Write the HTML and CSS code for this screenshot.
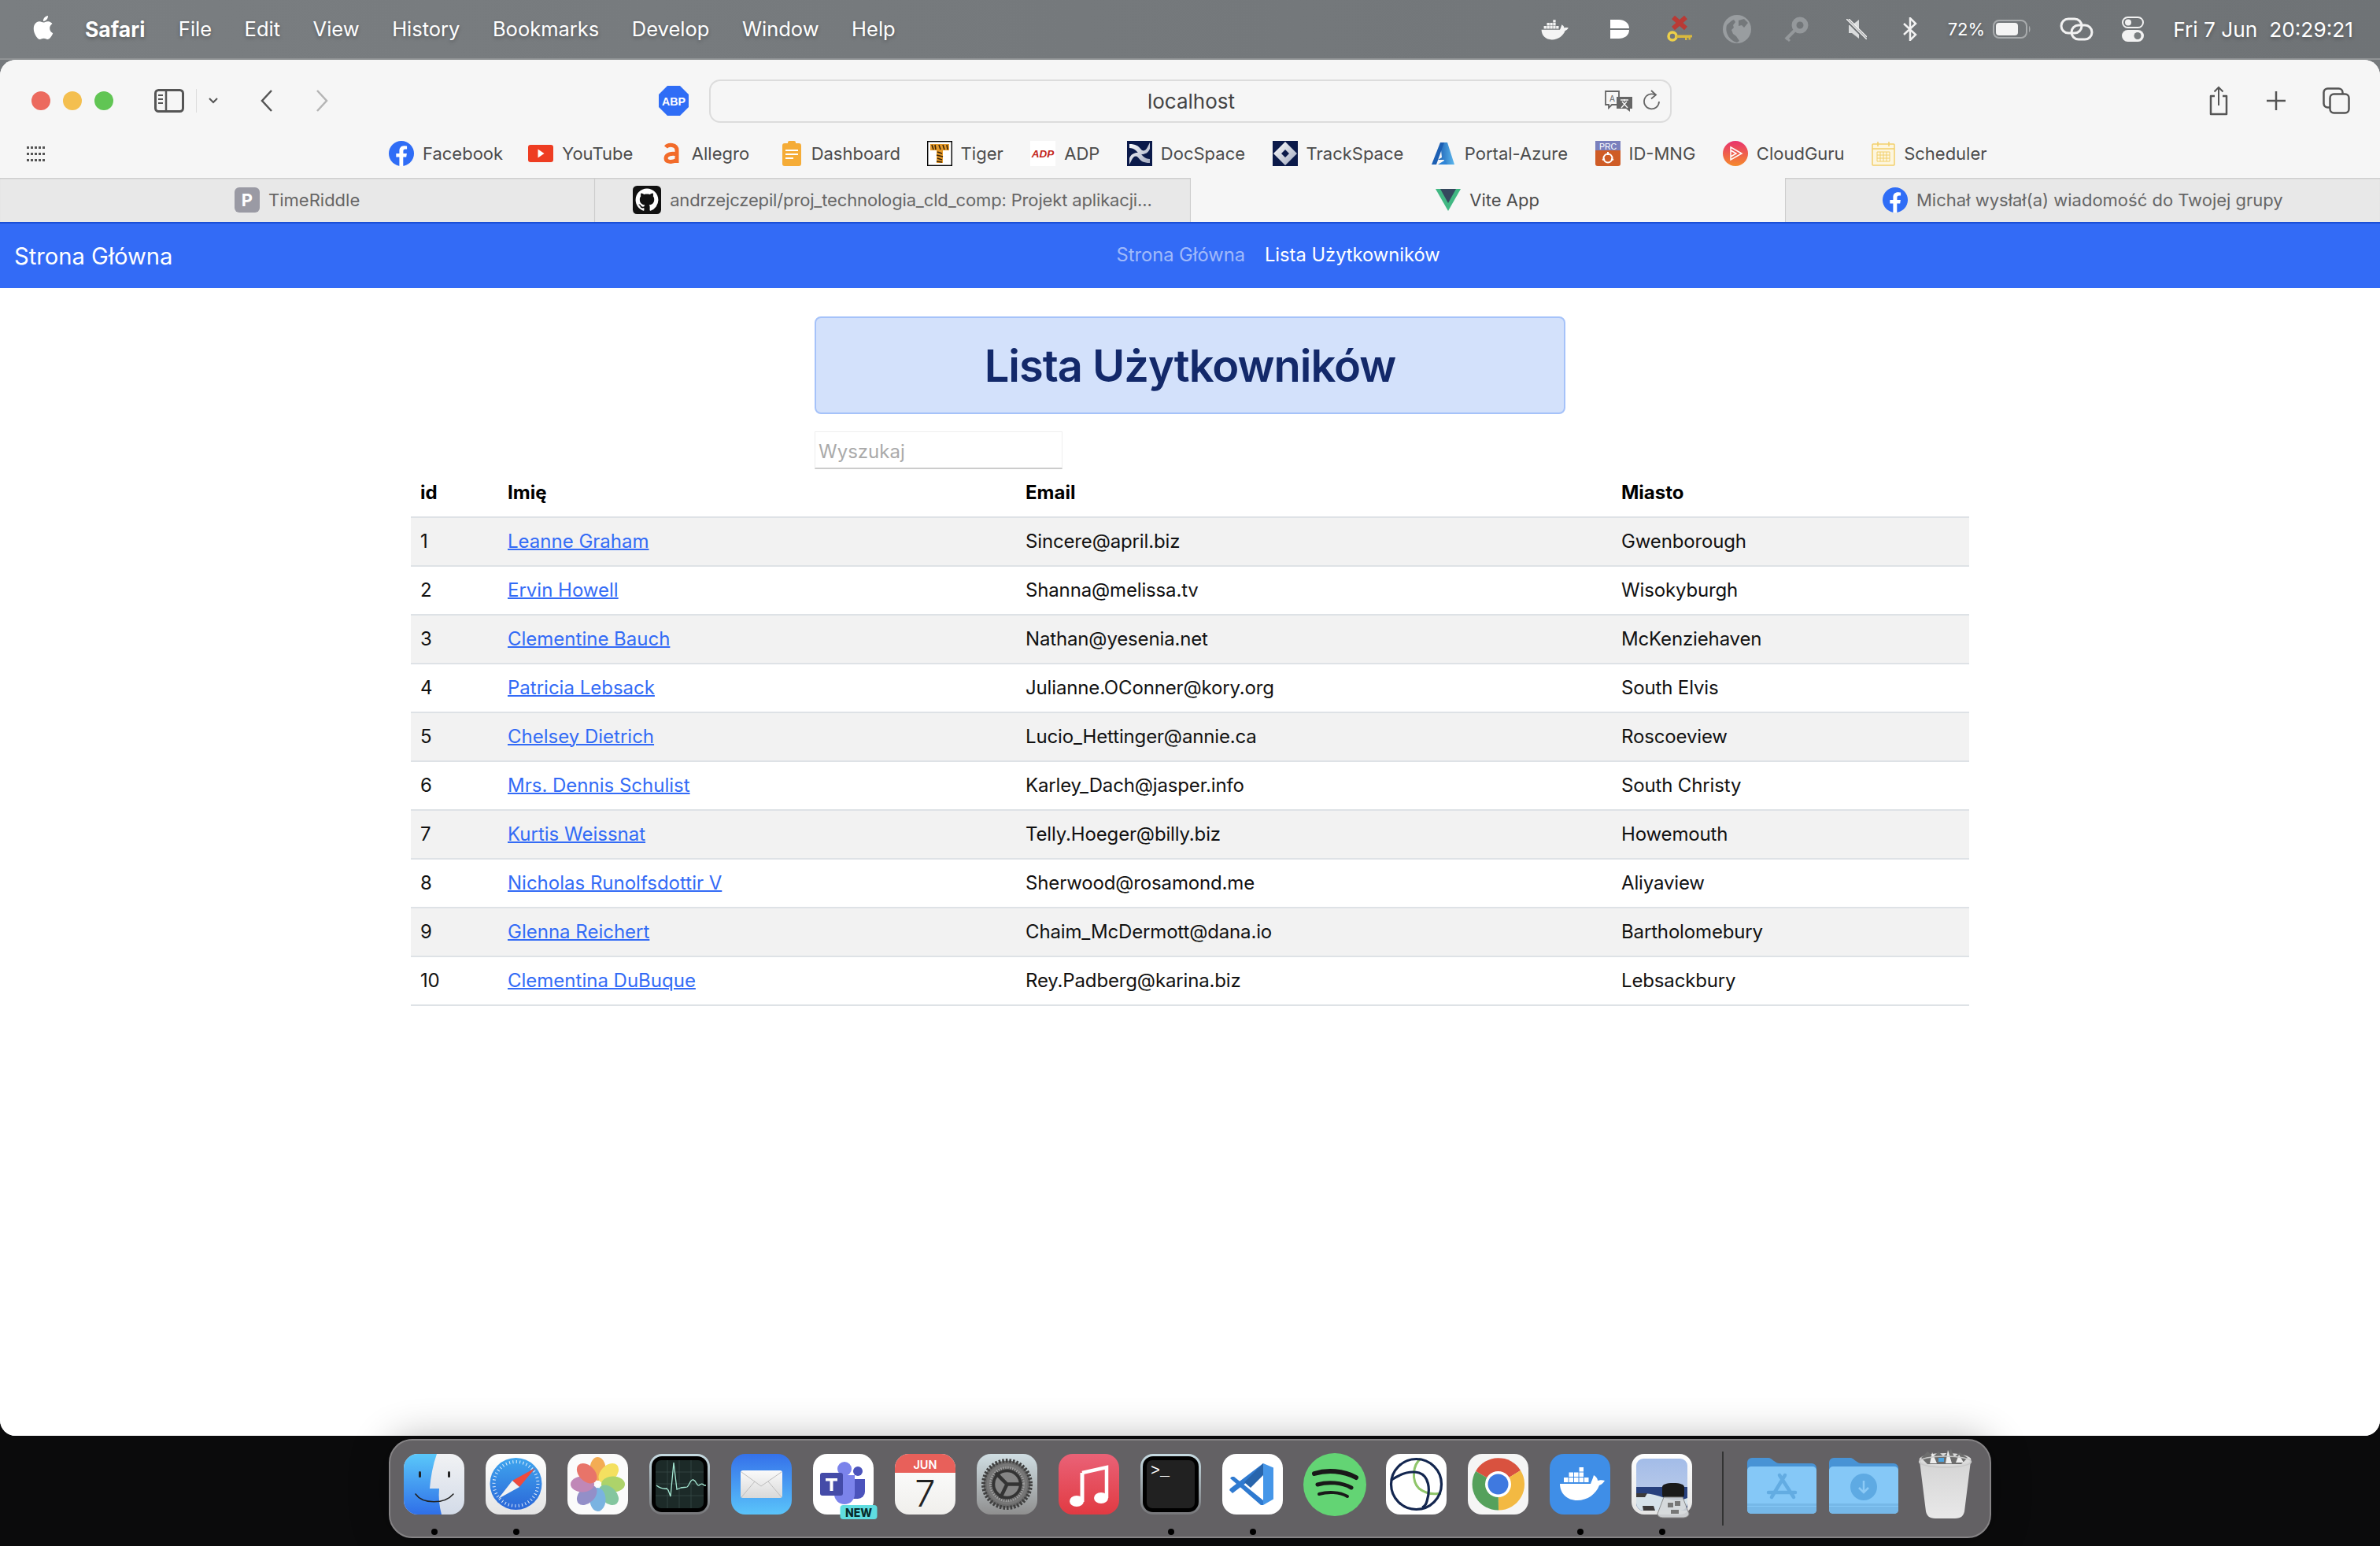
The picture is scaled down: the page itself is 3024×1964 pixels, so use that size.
FILE: index.html
```html
<!DOCTYPE html>
<html lang="pl">
<head>
<meta charset="utf-8">
<title>Vite App</title>
<link rel="stylesheet" href="styles.css">
</head>
<body>
<svg class="defs" width="0" height="0">
  <defs>
    <symbol id="whale" viewBox="0 0 77 77">
      <path d="M13 38H52C53 35 55 31 56 27C59 29 61 31 61 34C64 33 67 33 70 34C68 37 66 39 63 40C59 51 48 59 35 59C22 59 13 50 13 38Z"/>
      <path d="M18 30h5.500v6H18zM24.500 30h5.500v6h-5.500zM31 30h5.500v6H31zM37.500 30h5.500v6h-5.500zM44 30h5.500v6H44zM24.500 23.500h5.500v5.500h-5.500zM31 23.500h5.500v5.500H31zM37.500 23.500h5.500v5.500h-5.500zM37.500 17h5.500v5.500h-5.500z"/>
    </symbol>
    <symbol id="fb" viewBox="0 0 32 32">
      <circle cx="16" cy="16" r="16" fill="#2f6df6"/>
      <path fill="#fff" d="M22.200 20.600l.7-4.600h-4.500v-3c0-1.300.6-2.500 2.700-2.500h2V6.600s-1.800-.3-3.600-.3c-3.700 0-6.100 2.200-6.100 6.200V16h-4.100v4.600h4.100V32h4.900V20.600z"/>
    </symbol>
    <linearGradient id="gFinder" x1="0" y1="0" x2="0" y2="1"><stop offset="0" stop-color="#5ac8fa"/><stop offset="1" stop-color="#2f6fe8"/></linearGradient>
    <linearGradient id="gFinderR" x1="0" y1="0" x2="0" y2="1"><stop offset="0" stop-color="#f1f2f4"/><stop offset="1" stop-color="#d3dbe8"/></linearGradient>
    <linearGradient id="gWhite" x1="0" y1="0" x2="0" y2="1"><stop offset="0" stop-color="#fff"/><stop offset="1" stop-color="#e4e4e4"/></linearGradient>
    <linearGradient id="gSafari" x1="0" y1="0" x2="0" y2="1"><stop offset="0" stop-color="#3fa5ee"/><stop offset="1" stop-color="#2b67d8"/></linearGradient>
    <linearGradient id="gSilver" x1="0" y1="0" x2="0" y2="1"><stop offset="0" stop-color="#c6dbe2"/><stop offset="1" stop-color="#77777a"/></linearGradient>
    <linearGradient id="gMail" x1="0" y1="0" x2="0" y2="1"><stop offset="0" stop-color="#3571ea"/><stop offset="1" stop-color="#5ac4fa"/></linearGradient>
    <linearGradient id="gEnv" x1="0" y1="0" x2="0" y2="1"><stop offset="0" stop-color="#fafafa"/><stop offset="1" stop-color="#d9d9d9"/></linearGradient>
    <linearGradient id="gCal" x1="0" y1="0" x2="0" y2="1"><stop offset="0" stop-color="#fff"/><stop offset="1" stop-color="#f0efec"/></linearGradient>
    <linearGradient id="gGear" x1="0" y1="0" x2="0" y2="1"><stop offset="0" stop-color="#d0dee3"/><stop offset="1" stop-color="#8f8f8f"/></linearGradient>
    <linearGradient id="gMusic" x1="0" y1="0" x2="0" y2="1"><stop offset="0" stop-color="#ea6277"/><stop offset="1" stop-color="#e13a42"/></linearGradient>
    <linearGradient id="gSky" x1="0" y1="0" x2="0" y2="1"><stop offset="0" stop-color="#a3bce8"/><stop offset="1" stop-color="#c2d0ea"/></linearGradient>
    <linearGradient id="gTrash" x1="0" y1="0" x2="0" y2="1"><stop offset="0" stop-color="#dedede"/><stop offset="1" stop-color="#f4f4f4"/></linearGradient>
    <linearGradient id="gCloud" x1="0" y1="0" x2="0" y2="1"><stop offset="0" stop-color="#e8336e"/><stop offset="1" stop-color="#f58a2c"/></linearGradient>
    <linearGradient id="gAz" x1="0" y1="0" x2="1" y2="0"><stop offset="0" stop-color="#1c5fb3"/><stop offset="1" stop-color="#5cb8ee"/></linearGradient>
    <linearGradient id="gDoc" x1="0" y1="0" x2="1" y2="1"><stop offset="0" stop-color="#fff"/><stop offset="1" stop-color="#9ea6bd"/></linearGradient>
    <symbol id="folder" viewBox="0 0 88 74">
      <path fill="#4893d5" d="M0 8a6 6 0 0 1 6-6h20c4 0 5 2 8 4s4 3 7 3h41a6 6 0 0 1 6 6v20H0z"/>
      <rect y="13" width="88" height="60" rx="5" fill="#85c8f7"/>
      <path fill="#76b8e8" d="M0 60h88v8a5 5 0 0 1-5 5H5a5 5 0 0 1-5-5z"/>
      <path fill="#85c8f7" d="M0 63h88v1H0z"/>
    </symbol>
  </defs>
</svg>

<header class="menubar">
  <svg class="apple" viewBox="0 0 24 24"><path fill="#fff" d="M12.152 6.896c-.948 0-2.415-1.078-3.960-1.040-2.040.027-3.910 1.183-4.961 3.014-2.117 3.675-.546 9.103 1.519 12.090 1.013 1.454 2.208 3.090 3.792 3.039 1.520-.065 2.090-.987 3.935-.987 1.831 0 2.350.987 3.960.948 1.637-.026 2.676-1.480 3.676-2.948 1.156-1.688 1.636-3.325 1.662-3.415-.039-.013-3.182-1.221-3.220-4.857-.026-3.040 2.480-4.494 2.597-4.559-1.429-2.090-3.623-2.324-4.390-2.376-2-.156-3.675 1.090-4.610 1.090zM15.530 3.830c.843-1.012 1.400-2.427 1.245-3.830-1.207.052-2.662.805-3.532 1.818-.780.896-1.454 2.338-1.273 3.714 1.338.104 2.715-.688 3.559-1.701"/></svg>
  <nav class="menus">
    <span class="menu-app">Safari</span><span>File</span><span>Edit</span><span>View</span><span>History</span><span>Bookmarks</span><span>Develop</span><span>Window</span><span>Help</span>
  </nav>
  <div class="status">
    <svg class="st st-docker" viewBox="12 15 60 45"><use href="#whale" width="77" height="77" fill="#f4f4f4"/></svg>
    <svg class="st st-d" viewBox="0 0 24 24"><path fill="#fff" d="M0 0h11c7 0 13 4 13 11H0zM0 13h24c0 7-6 11-13 11H0z"/></svg>
    <svg class="st st-x" viewBox="0 0 32 34">
      <path d="M8 2l16 14M24 2L8 16" stroke="#b93a35" stroke-width="6" fill="none"/>
      <circle cx="7" cy="26" r="5" fill="none" stroke="#edd04a" stroke-width="3.500"/>
      <path d="M12 24.500h20v3h-2v3h-2.500v-2.500h-2v3H23v-3H12z" fill="#d9b93e"/>
    </svg>
    <svg class="st st-globe" viewBox="0 0 36 36"><circle cx="18" cy="18" r="18" fill="#999da0"/><path fill="#74787b" d="M5 13c3-3 6-6 9-7l2 3-3 4 1 3-3 3 2 5 4 3 4 6-3 2C10 33 2 24 5 13zM20 7l7-2 5 5-5 6-3-3-4 1z"/></svg>
    <svg class="st st-key" viewBox="0 0 32 32"><path fill="none" stroke="#94989b" stroke-width="4" d="M15 17L3 29"/><path stroke="#94989b" stroke-width="3" d="M4 27l4 4"/><circle cx="21" cy="11" r="7.500" fill="none" stroke="#94989b" stroke-width="6"/></svg>
    <svg class="st st-mute" viewBox="0 0 26 26"><path fill="#dadcdd" d="M3 8h4l9-7v24l-9-7H3z"/><path stroke="#6f7376" stroke-width="4" d="M1 2l24 24"/><path stroke="#f2f2f2" stroke-width="1.500" d="M0 0l26 26M3 0l23 23"/></svg>
    <svg class="st st-bt" viewBox="0 0 18 30"><path fill="none" stroke="#f2f2f2" stroke-width="2.500" d="M1 8l15 14-7 7V1l7 7L1 22"/></svg>
    <span class="st-pct">72%</span>
    <svg class="st st-batt" viewBox="0 0 49 24"><rect x="1" y="1" width="42" height="22" rx="7" fill="none" stroke="#a8abad" stroke-width="2"/><rect x="4" y="4" width="28" height="16" rx="4" fill="#f4f4f4"/><path d="M46 8c2 1 2 7 0 8z" fill="#a8abad"/></svg>
    <svg class="st st-link" viewBox="0 0 43 30"><g fill="none" stroke="#f2f2f2" stroke-width="3"><rect x="2" y="2" width="26" height="18" rx="9"/><rect x="15" y="10" width="26" height="18" rx="9"/></g></svg>
    <svg class="st st-cc" viewBox="0 0 28 32"><rect x="1" y="1" width="26" height="13" rx="6.500" fill="none" stroke="#f2f2f2" stroke-width="2"/><circle cx="8" cy="7.500" r="4" fill="#f2f2f2"/><rect y="17" width="28" height="15" rx="7.500" fill="#f2f2f2"/><circle cx="20" cy="24.500" r="4.500" fill="#7a7e80"/></svg>
    <span class="st-date">Fri 7 Jun&nbsp; 20:29:21</span>
  </div>
</header>

<main class="window">
  <div class="toolbar">
    <span class="light red"></span><span class="light amber"></span><span class="light green"></span>
    <svg class="tb-side" viewBox="0 0 38 30"><rect x="1.500" y="1.500" width="35" height="27" rx="4" fill="none" stroke="#555" stroke-width="3"/><path d="M15 2v26" stroke="#555" stroke-width="2.500"/><path d="M5 8h6M5 13h6M5 18h6" stroke="#555" stroke-width="2"/></svg>
    <span class="tb-div"></span>
    <svg class="tb-chev" viewBox="0 0 12 8"><path d="M1 1l5 5 5-5" fill="none" stroke="#555" stroke-width="2"/></svg>
    <svg class="tb-back" viewBox="0 0 16 28"><path d="M14 1L2 14l12 13" fill="none" stroke="#555" stroke-width="2.500"/></svg>
    <svg class="tb-fwd" viewBox="0 0 16 28"><path d="M2 1l12 13L2 27" fill="none" stroke="#b5b5b5" stroke-width="2.500"/></svg>
    <svg class="tb-abp" viewBox="0 0 38 38"><path fill="#2f6df6" d="M11 0h16l11 11v16L27 38H11L0 27V11z"/><text x="19" y="24.500" class="abp-text" textLength="30" lengthAdjust="spacingAndGlyphs">ABP</text></svg>
    <div class="url">
      <span class="url-text">localhost</span>
      <svg class="url-tr" viewBox="0 0 38 28"><path d="M2 2h17v17H10l-4 4v-4H2z" fill="#f6f6f6" stroke="#666" stroke-width="1.800"/><text x="10.500" y="15" class="tr-a">A</text><path d="M16 9h20v15h-3v4l-5-4H16z" fill="#666"/><path d="M21 13h10M26 12v3M22 23l7-8M23 15l7 8" stroke="#f6f6f6" stroke-width="1.400" fill="none"/></svg>
      <svg class="url-re" viewBox="0 0 22 28"><path d="M15 6.500A9.500 9.500 0 1 0 20 15" fill="none" stroke="#666" stroke-width="1.800"/><path d="M10 1l6 5.500-6 5" fill="none" stroke="#666" stroke-width="1.800"/></svg>
    </div>
    <svg class="tb-share" viewBox="0 0 24 38"><path d="M7 13H2v23h20V13h-5" fill="none" stroke="#555" stroke-width="2.500" stroke-linejoin="round"/><path d="M12 25V2M6.500 7.500L12 2l5.500 5.500" fill="none" stroke="#555" stroke-width="2"/></svg>
    <svg class="tb-plus" viewBox="0 0 24 24"><path d="M12 0v24M0 12h24" stroke="#555" stroke-width="2.500"/></svg>
    <svg class="tb-tabs" viewBox="0 0 35 34"><rect x="1.500" y="1.500" width="24" height="24" rx="5" fill="none" stroke="#555" stroke-width="2.500"/><rect x="9.500" y="8.500" width="24" height="24" rx="5" fill="#f6f6f6" stroke="#555" stroke-width="2.500"/></svg>
  </div>

  <div class="bookmarks">
    <svg class="bm-grid" viewBox="0 0 24 20"><g fill="#555"><path d="M0 0h3v3H0zM5 0h3v3H5zM10 0h3v3h-3zM15 0h3v3h-3zM20 0h3v3h-3zM0 8h3v3H0zM5 8h3v3H5zM10 8h3v3h-3zM15 8h3v3h-3zM20 8h3v3h-3zM0 16h3v3H0zM5 16h3v3H5zM10 16h3v3h-3zM15 16h3v3h-3zM20 16h3v3h-3z"/></g></svg>
    <a class="bm bm-first"><svg class="ico" viewBox="0 0 32 32"><use href="#fb"/></svg>Facebook</a>
    <a class="bm bm-yt"><svg class="ico" viewBox="0 0 32 32"><rect y="5" width="32" height="22" rx="3" fill="#ee3d22"/><path d="M12.500 10.500l8 5.500-8 5.500z" fill="#fff"/></svg>YouTube</a>
    <a class="bm bm-alg"><svg class="ico ico-alg" viewBox="0 0 22 32"><path d="M4 8c3-4 14-4 14 4v16M18 17c-6-2-14 0-14 5s8 6 14 2" fill="none" stroke="#f26b2a" stroke-width="5"/></svg>Allegro</a>
    <a class="bm bm-dash"><svg class="ico ico-dash" viewBox="0 0 24 32"><rect y="3" width="24" height="29" rx="3" fill="#f5ac37"/><rect x="7" y="0" width="10" height="6" rx="2" fill="#f5ac37"/><path d="M4 12h16M4 17h16M4 22h10" stroke="#fff" stroke-width="2"/></svg>Dashboard</a>
    <a class="bm bm-tiger"><svg class="ico" viewBox="0 0 32 32"><rect x=".7" y=".7" width="30.600" height="30.600" fill="#fff" stroke="#000" stroke-width="1.400"/><path d="M4 4h24v8h-8v16h-8V12H4z" fill="#e59a2a"/><path d="M6 5l2 6M10 5l1 6M15 5l2 6M20 5l2 6M25 5l1 6M13 14l6 2M12 18l8 2M13 22l6 2M12 26l7 1" stroke="#3a2408" stroke-width="1.600"/></svg>Tiger</a>
    <a class="bm"><svg class="ico" viewBox="0 0 32 32"><rect width="32" height="32" fill="#fff"/><text x="16" y="21" class="adp-text">ADP</text></svg>ADP</a>
    <a class="bm"><svg class="ico" viewBox="0 0 32 32"><rect width="32" height="32" fill="#0b1a4a"/><path fill="url(#gDoc)" d="M3 4c8 0 11 2 15 7 3 3 6 1 8-3l3-6v8c-2 5-6 7-10 7-4 0-5-2-8-5-2-2-5-3-8-3zM29 28c-8 0-11-2-15-7-3-3-6-1-8 3l-3 6v-8c2-5 6-7 10-7 4 0 5 2 8 5 2 2 5 3 8 3z"/></svg>DocSpace</a>
    <a class="bm"><svg class="ico" viewBox="0 0 32 32"><rect width="32" height="32" fill="#0b1a4a"/><path fill="url(#gDoc)" fill-rule="evenodd" d="M16 1l15 15-15 15L1 16zM16 11l-5 5 5 5 5-5z"/></svg>TrackSpace</a>
    <a class="bm"><svg class="ico" viewBox="0 0 32 32"><path fill="url(#gAz)" d="M12 2h9l9 28H19l-2-6H9l5-3z"/><path fill="#1c5fb3" d="M12 2h5L7 30H1z"/><path fill="#2f85d8" d="M14 17l7 13H9l8-5z"/></svg>Portal-Azure</a>
    <a class="bm"><svg class="ico" viewBox="0 0 32 32"><rect width="32" height="13" fill="#7a80bd"/><text x="16" y="11" class="prc-text">PRC</text><path d="M0 12h32v17a3 3 0 0 1-3 3H3a3 3 0 0 1-3-3z" fill="#cf5c26"/><circle cx="16" cy="22" r="5.500" fill="none" stroke="#fff" stroke-width="2"/><path d="M16 14v4M9 24l3-1M23 24l-3-1" stroke="#fff" stroke-width="2"/></svg>ID-MNG</a>
    <a class="bm"><svg class="ico" viewBox="0 0 32 32"><circle cx="16" cy="16" r="16" fill="url(#gCloud)"/><path d="M10 8l14 8-14 8zM10 12l7 4-7 4" fill="none" stroke="#fff" stroke-width="1.500"/></svg>CloudGuru</a>
    <a class="bm"><svg class="ico ico-sch" viewBox="0 0 30 32"><rect x="1" y="4" width="28" height="27" rx="1" fill="#fdf6df" stroke="#f2cf6b" stroke-width="1.500"/><path d="M1 10h28M8 1v6M22 1v6" stroke="#f2cf6b" stroke-width="1.500"/><path d="M7 14h16v12H7zM7 18h16M7 22h16M11 14v12M15 14v12M19 14v12" fill="none" stroke="#f2cf6b" stroke-width="1"/></svg>Scheduler</a>
  </div>

  <div class="tabs">
    <div class="tab"><svg class="ico" viewBox="0 0 32 32"><rect width="32" height="32" rx="6" fill="#9a9aa4"/><text x="16" y="24" class="p-text">P</text></svg>TimeRiddle</div>
    <div class="tab tab-gh"><svg class="ico ico-gh" viewBox="-2 -2 20 20"><rect x="-2" y="-2" width="20" height="20" rx="3" fill="#111"/><path fill="#fff" d="M8 0C3.580 0 0 3.580 0 8c0 3.540 2.290 6.530 5.470 7.590.4.070.55-.17.55-.38 0-.19-.01-.82-.01-1.490-2.010.37-2.530-.49-2.690-.94-.09-.23-.48-.94-.82-1.130-.28-.15-.68-.52-.01-.53.63-.01 1.080.58 1.230.82.72 1.210 1.870.87 2.330.66.07-.52.28-.87.51-1.070-1.780-.2-3.640-.89-3.640-3.950 0-.87.31-1.590.82-2.150-.08-.2-.36-1.020.08-2.120 0 0 .67-.21 2.200.82.64-.18 1.320-.27 2-.27.68 0 1.360.09 2 .27 1.530-1.040 2.200-.82 2.200-.82.44 1.100.16 1.920.08 2.120.51.56.82 1.270.82 2.150 0 3.070-1.870 3.750-3.650 3.950.29.25.54.73.54 1.480 0 1.070-.01 1.930-.01 2.200 0 .21.15.46.55.38A8.013 8.013 0 0 0 16 8c0-4.420-3.580-8-8-8z"/></svg>andrzejczepil/proj_technologia_cld_comp: Projekt aplikacji...</div>
    <div class="tab tab-active"><svg class="ico" viewBox="0 0 32 28"><path d="M0 0h32L16 28z" fill="#41b883"/><path d="M6 0h20L16 18z" fill="#35495e"/></svg>Vite App</div>
    <div class="tab"><svg class="ico" viewBox="0 0 32 32"><use href="#fb"/></svg>Michał wysłał(a) wiadomość do Twojej grupy</div>
  </div>

  <nav class="navbar">
    <a class="brand">Strona Główna</a>
    <div class="nav-links">
      <a class="nav-link">Strona Główna</a>
      <a class="nav-link nav-active">Lista Użytkowników</a>
    </div>
  </nav>

  <section class="page">
    <h1 class="title">Lista Użytkowników</h1>
    <div class="search-row"><input class="search" type="text" placeholder="Wyszukaj"></div>
    <table class="users">
      <colgroup><col class="c-id"><col class="c-name"><col class="c-mail"><col class="c-city"></colgroup>
      <thead><tr><th>id</th><th>Imię</th><th>Email</th><th>Miasto</th></tr></thead>
      <tbody>
        <tr><td>1</td><td><a href="#">Leanne Graham</a></td><td>Sincere@april.biz</td><td>Gwenborough</td></tr>
        <tr><td>2</td><td><a href="#">Ervin Howell</a></td><td>Shanna@melissa.tv</td><td>Wisokyburgh</td></tr>
        <tr><td>3</td><td><a href="#">Clementine Bauch</a></td><td>Nathan@yesenia.net</td><td>McKenziehaven</td></tr>
        <tr><td>4</td><td><a href="#">Patricia Lebsack</a></td><td>Julianne.OConner@kory.org</td><td>South Elvis</td></tr>
        <tr><td>5</td><td><a href="#">Chelsey Dietrich</a></td><td>Lucio_Hettinger@annie.ca</td><td>Roscoeview</td></tr>
        <tr><td>6</td><td><a href="#">Mrs. Dennis Schulist</a></td><td>Karley_Dach@jasper.info</td><td>South Christy</td></tr>
        <tr><td>7</td><td><a href="#">Kurtis Weissnat</a></td><td>Telly.Hoeger@billy.biz</td><td>Howemouth</td></tr>
        <tr><td>8</td><td><a href="#">Nicholas Runolfsdottir V</a></td><td>Sherwood@rosamond.me</td><td>Aliyaview</td></tr>
        <tr><td>9</td><td><a href="#">Glenna Reichert</a></td><td>Chaim_McDermott@dana.io</td><td>Bartholomebury</td></tr>
        <tr><td>10</td><td><a href="#">Clementina DuBuque</a></td><td>Rey.Padberg@karina.biz</td><td>Lebsackbury</td></tr>
      </tbody>
    </table>
  </section>
</main>

<footer class="dock-area">
  <div class="dock">
    <div class="app run"><svg viewBox="0 0 77 77"><rect width="77" height="77" rx="18" fill="url(#gFinderR)"/><path d="M18 0H42C37 14 34 30 33 44H45C44 55 45 66 48 77H18A18 18 0 0 1 0 59V18A18 18 0 0 1 18 0Z" fill="url(#gFinder)"/><path d="M15 51C24 64 52 64 63 51" fill="none" stroke="#222" stroke-width="1.600" stroke-linecap="round"/><rect x="19" y="22" width="3" height="8" rx="1.500" fill="#222"/><rect x="56" y="22" width="3" height="8" rx="1.500" fill="#222"/></svg></div>
    <div class="app run"><svg viewBox="0 0 77 77"><rect width="77" height="77" rx="18" fill="url(#gWhite)"/><circle cx="38.500" cy="38" r="33" fill="url(#gSafari)"/><circle cx="38.500" cy="38" r="28" fill="none" stroke="#fff" stroke-width="4" stroke-dasharray="1 3.400" opacity=".85"/><path d="M63 18L34 34l9 8z" fill="#ef4a3d"/><path d="M16 57L34 34l9 8z" fill="#f2f2f2"/></svg></div>
    <div class="app"><svg viewBox="0 0 77 77"><rect width="77" height="77" rx="18" fill="#fbfbfb"/><g opacity=".82"><ellipse cx="38.500" cy="19" rx="10" ry="15" fill="#f29b30"/><ellipse cx="38.500" cy="19" rx="10" ry="15" fill="#f3db3f" transform="rotate(45 38.500 38.500)"/><ellipse cx="38.500" cy="19" rx="10" ry="15" fill="#9ccb4b" transform="rotate(90 38.500 38.500)"/><ellipse cx="38.500" cy="19" rx="10" ry="15" fill="#6bbb8c" transform="rotate(135 38.500 38.500)"/><ellipse cx="38.500" cy="19" rx="10" ry="15" fill="#5ea4dc" transform="rotate(180 38.500 38.500)"/><ellipse cx="38.500" cy="19" rx="10" ry="15" fill="#7d78bd" transform="rotate(225 38.500 38.500)"/><ellipse cx="38.500" cy="19" rx="10" ry="15" fill="#b46ea9" transform="rotate(270 38.500 38.500)"/><ellipse cx="38.500" cy="19" rx="10" ry="15" fill="#e5574a" transform="rotate(315 38.500 38.500)"/></g><circle cx="38.500" cy="39" r="1.500" fill="#fff"/></svg></div>
    <div class="app"><svg viewBox="0 0 77 77"><rect width="77" height="77" rx="16" fill="url(#gSilver)"/><rect x="3" y="3" width="71" height="71" rx="13" fill="#000"/><rect x="8" y="8" width="61" height="61" rx="7" fill="#1c2a28"/><path d="M8 23h61M8 38h61M8 53h61M23 8v61M38 8v61M53 8v61" stroke="#3b4f4c" stroke-width=".7"/><path d="M9 40c4 3 8 5 13 4 1 0 1 2 2 2l3 8 4-43 4 34 5-2c4-1 5 0 8-1 3-2 4-10 8-9 4 1 4 8 7 7 3-2 4-3 7 0h2" fill="none" stroke="#a5e8d3" stroke-width="1.300"/></svg></div>
    <div class="app"><svg viewBox="0 0 77 77"><rect width="77" height="77" rx="18" fill="url(#gMail)"/><rect x="12" y="21" width="53" height="35" rx="3" fill="url(#gEnv)"/><path d="M13 23l25 18 26-18M13 55l17-20M64 55L47 35" fill="none" stroke="#bdbdbd" stroke-width="1"/></svg></div>
    <div class="app"><svg viewBox="0 0 77 77" class="ov"><rect width="77" height="77" rx="18" fill="#fff"/><circle cx="40" cy="19" r="9" fill="#7b83eb"/><circle cx="57" cy="22" r="6" fill="#4b53bc"/><path d="M50 32h16v16a9 9 0 0 1-9 9h-7z" fill="#4b53bc"/><path d="M27 27h26v24a13 13 0 0 1-26 0z" fill="#7b83eb"/><rect x="9" y="24" width="29" height="29" rx="3" fill="#444ba8"/><path d="M16 31h15v3.500h-5.500V47h-4V34.500H16z" fill="#fff"/><rect x="34.500" y="65" width="47" height="18" rx="4" fill="#5fdde0"/><text x="58" y="79.500" class="new-text">NEW</text></svg></div>
    <div class="app"><svg viewBox="0 0 77 77"><rect width="77" height="77" rx="18" fill="url(#gCal)"/><path d="M18 0h41a18 18 0 0 1 18 18v6H0v-6A18 18 0 0 1 18 0z" fill="#e8605a"/><text x="38.500" y="19" class="jun-text">JUN</text><text x="38.500" y="67" class="seven-text">7</text></svg></div>
    <div class="app"><svg viewBox="0 0 77 77"><rect width="77" height="77" rx="18" fill="url(#gGear)"/><circle cx="38.500" cy="38.500" r="30" fill="#6a6a6a" stroke="#3f3f3f" stroke-width="5" stroke-dasharray="2.500 2"/><circle cx="38.500" cy="38.500" r="26" fill="#777"/><circle cx="38.500" cy="38.500" r="21" fill="#555" stroke="#a0a0a0" stroke-width="3" stroke-dasharray="1.500 1.500"/><circle cx="38.500" cy="38.500" r="17" fill="#858585"/><path d="M38.500 38.500L24 24M38.500 38.500h19M38.500 38.500L30 56" stroke="#333" stroke-width="4.500"/><circle cx="38.500" cy="38.500" r="17" fill="none" stroke="#333" stroke-width="3.500"/></svg></div>
    <div class="app"><svg viewBox="0 0 77 77"><rect width="77" height="77" rx="18" fill="url(#gMusic)"/><path d="M30 24l31-7v39" fill="none" stroke="#fff" stroke-width="4.500"/><path d="M30 24v37" fill="none" stroke="#fff" stroke-width="5"/><ellipse cx="23" cy="60" rx="9" ry="7" fill="#fff"/><ellipse cx="54" cy="56" rx="9" ry="7" fill="#fff"/></svg></div>
    <div class="app run"><svg viewBox="0 0 77 77"><rect width="77" height="77" rx="16" fill="url(#gSilver)"/><rect x="3" y="3" width="71" height="71" rx="13" fill="#000"/><rect x="8" y="8" width="61" height="61" rx="7" fill="#212121"/><text x="13" y="27" class="term-text">&gt;_</text></svg></div>
    <div class="app run"><svg viewBox="0 0 77 77"><rect width="77" height="77" rx="18" fill="#fff"/><path d="M52 12L10 44l-1 2 4 4L52 20z" fill="#2f7ad0"/><path d="M10 31l2-2 3 0 37 30v6l-3 0z" fill="#2f7ad0"/><path d="M52 12L28 36l8 7L52 27z" fill="#2865ac"/><path d="M52 12l13 5.500v40L52 65z" fill="#4596e8"/></svg></div>
    <div class="app"><svg viewBox="0 0 80 80" class="ov sp"><circle cx="40" cy="40" r="40" fill="#63d474"/><g fill="none" stroke="#191919" stroke-linecap="round"><path d="M14 26c16-5 37-4 53 5" stroke-width="6"/><path d="M18 40c13-4 31-3 43 4" stroke-width="5"/><path d="M20 52c11-3 26-3 36 3" stroke-width="4"/></g></svg></div>
    <div class="app"><svg viewBox="0 0 77 77"><rect width="77" height="77" rx="18" fill="#fff"/><path d="M44 6c-10 8-12 28-2 38 8 6 18 8 28 6" fill="none" stroke="#8fc56a" stroke-width="3"/><circle cx="38.500" cy="38.500" r="32" fill="none" stroke="#13264f" stroke-width="3.200"/><path d="M7 33c12-8 24-12 35-9 12 4 15 20 10 36-1 4-3 7-6 8" fill="none" stroke="#13264f" stroke-width="3.200"/></svg></div>
    <div class="app"><svg viewBox="0 0 77 77"><rect width="77" height="77" rx="18" fill="#f5f5f5"/><path d="M38.500 38.500L10 22A33 33 0 0 1 67 21z" fill="#d9523f"/><path d="M38.500 38.500L67 21A33 33 0 0 1 39 71.500z" fill="#f3b942"/><path d="M38.500 38.500L39 71.500A33 33 0 0 1 10 22z" fill="#55a15c"/><circle cx="38.500" cy="38.500" r="16.500" fill="#fff"/><circle cx="38.500" cy="38.500" r="13" fill="#3f79e0"/></svg></div>
    <div class="app run"><svg viewBox="0 0 77 77"><rect width="77" height="77" rx="18" fill="#3f8ee7"/><use href="#whale" width="77" height="77" fill="#fff"/></svg></div>
    <div class="app run"><svg viewBox="0 0 77 77" class="ov"><rect width="77" height="77" rx="16" fill="url(#gWhite)"/><rect x="6" y="6" width="65" height="66" rx="9" fill="url(#gSky)"/><path d="M6 42h65v30H15a9 9 0 0 1-9-9z" fill="#27407e"/><path d="M6 52c12-4 24 0 36 4s20 4 29 0v7a9 9 0 0 1-9 9H15a9 9 0 0 1-9-9z" fill="#d6e2ea"/><path d="M6 50h14l-3 5H6zM14 66h14l2 6H15z" fill="#3c3a3a"/><path d="M39 42c0-3 5-5 14-5s14 2 14 5v10c0 2-2 3-2 3H41s-2-1-2-3z" fill="#1a1a1a"/><path d="M41 55h24l8 21c0 3-4 5-8 5H41c-5 0-8-2-8-5z" fill="#d5d8da" fill-opacity=".9" stroke="#8c8c8c"/><path d="M46 62h7v6h-7zM55 60h7v6h-7zM50 71h10v5H50z" fill="#777"/></svg></div>
    <span class="dock-sep"></span>
    <div class="app wide f1"><svg viewBox="0 -3 88 77"><use href="#folder" width="88" height="74"/><g fill="none" stroke="#63ace2" stroke-width="4.500" stroke-linecap="round"><path d="M41 24l18 28M48 24L31 52M27 46h34"/></g></svg></div>
    <div class="app wide f2"><svg viewBox="0 -3 88 77"><use href="#folder" width="88" height="74"/><ellipse cx="44" cy="39" rx="17" ry="17" fill="#5eaae3"/><path d="M44 31v15M38 40l6 6 6-6" fill="none" stroke="#8ccaf6" stroke-width="2.500"/></svg></div>
    <div class="app trash"><svg viewBox="0 0 69 89"><path d="M2 16l8 64c1 5 4 9 12 9h25c8 0 11-4 12-9l8-64z" fill="url(#gTrash)" fill-opacity=".92"/><ellipse cx="34.500" cy="14" rx="33" ry="8" fill="#dcdcdc"/><path d="M4 12l8-8 8 6 6-6 6 6 10-9 4 10 7-6 10 7-8 8H12z" fill="#6d6d6d"/><path d="M18 5l6 14h-9zM38 2l5 17h-8zM52 8l6 10h-10z" fill="#eee"/><path d="M26 12h7v5h-7z" fill="#4ba3e0"/><ellipse cx="34.500" cy="17" rx="33" ry="7" fill="none" stroke="#c9c9c9" stroke-width="1.500"/></svg></div>
  </div>
</footer>
</body>
</html>
```
FILE: styles.css
```css
* { box-sizing: border-box; }
html, body { margin: 0; height: 100%; overflow: hidden; }
body {
  width: 3024px;
  height: 1964px;
  display: flex;
  flex-direction: column;
  font-family: Inter, "Noto Sans", sans-serif;
  background: linear-gradient(#75797c 0 110px, #0b0b0c 110px);
}
svg { display: block; flex: none; }
.defs { position: absolute; }

/* menu bar */
.menubar {
  height: 76px;
  flex: none;
  display: flex;
  align-items: center;
  background: linear-gradient(90deg, #7a7e81, #6f7376);
  color: #fff;
  font-size: 25.500px;
  text-shadow: 0 2px 5px rgba(0,0,0,.3);
  border-bottom: 2px solid #909395;
}
.apple { width: 30px; height: 32px; margin: -4px 0 0 40px; }
.menus { display: flex; gap: 41.500px; margin-left: 38px; }
.menu-app { font-weight: 700; font-size: 26.500px; margin-right: 1px; }
.status { margin-left: auto; padding-right: 34px; display: flex; align-items: center; }
.st-docker { width: 36px; height: 29px; }
.st-d { width: 24px; height: 24px; margin-left: 52px; }
.st-x { width: 32px; height: 34px; margin-left: 48px; }
.st-globe { width: 36px; height: 36px; margin-left: 39px; }
.st-key { width: 32px; height: 32px; margin-left: 41px; }
.st-mute { width: 26px; height: 26px; margin-left: 48px; }
.st-bt { width: 18px; height: 30px; margin-left: 46px; }
.st-pct { margin-left: 39px; font-size: 22px; }
.st-batt { width: 49px; height: 24px; margin-left: 10px; }
.st-link { width: 43px; height: 30px; margin-left: 36px; }
.st-cc { width: 28px; height: 32px; margin-left: 36px; }
.st-date { margin-left: 37px; font-size: 26.300px; }

/* window */
.window {
  flex: 1;
  min-height: 0;
  display: flex;
  flex-direction: column;
  border-radius: 20px;
  overflow: hidden;
  background: #fff;
}
.toolbar {
  height: 88px;
  flex: none;
  padding: 16px 0 0 40px;
  display: flex;
  align-items: center;
  background: #f6f6f6;
}
.light { width: 24px; height: 24px; border-radius: 50%; margin-right: 16px; }
.red { background: #ec6a5e; }
.amber { background: #f4bf4f; }
.green { background: #61c554; }
.tb-side { width: 38px; height: 30px; margin-left: 36px; }
.tb-div { width: 1px; height: 30px; background: #ddd; margin-left: 15px; }
.tb-chev { width: 12px; height: 8px; margin-left: 15px; }
.tb-back { width: 16px; height: 28px; margin-left: 54px; }
.tb-fwd { width: 16px; height: 28px; margin-left: 54px; }
.tb-abp { width: 38px; height: 38px; margin-left: 420px; }
.abp-text { font: 700 15px "Liberation Sans", sans-serif; fill: #fff; text-anchor: middle; }
.url {
  position: relative;
  width: 1223px;
  height: 55px;
  margin-left: 26px;
  border: 2px solid #dcdcdc;
  border-radius: 14px;
  display: flex;
  align-items: center;
  justify-content: center;
  color: #444;
  font-size: 26px;
}
.url-text { padding-left: 2px; }
.url-tr { position: absolute; right: 46px; top: 11px; width: 38px; height: 28px; }
.url-re { position: absolute; right: 12px; top: 11px; width: 22px; height: 28px; }
.tr-a { font: 10px Inter, sans-serif; fill: #666; text-anchor: middle; }
.tb-share { width: 24px; height: 38px; margin-left: 683px; }
.tb-plus { width: 24px; height: 24px; margin-left: 49px; }
.tb-tabs { width: 35px; height: 34px; margin-left: 47px; }

.bookmarks {
  height: 62px;
  flex: none;
  display: flex;
  align-items: center;
  padding-left: 34px;
  background: #f6f6f6;
  font-size: 22px;
  color: #4c4c4c;
}
.bm-grid { width: 24px; height: 20px; margin-top: 2px; }
.bm { display: flex; align-items: center; gap: 11px; margin-left: 34.500px; }
.bm-first { margin-left: 436px; }
.bm-yt { margin-left: 32px; }
.bm-alg { margin-left: 37.500px; }
.bm-dash { margin-left: 41.500px; }
.bm-tiger { margin-left: 33.500px; }
.ico { width: 32px; height: 32px; }
.ico-alg { width: 22px; margin-right: 4px; }
.ico-dash { width: 24px; margin-right: 2px; }
.ico-sch { width: 30px; }
.ico-gh { width: 36px; height: 36px; }
.adp-text { font: italic 700 13.500px "Liberation Sans", sans-serif; fill: #c4281c; text-anchor: middle; }
.prc-text { font: 10.500px "Liberation Sans", sans-serif; fill: #fff; text-anchor: middle; }
.p-text { font: 700 22px Inter, sans-serif; fill: #fff; text-anchor: middle; }

.tabs { height: 56px; flex: none; display: flex; font-size: 22px; color: #666; }
.tab {
  flex: 1;
  display: flex;
  align-items: center;
  justify-content: center;
  gap: 11px;
  background: #e8e8e8;
  border-right: 1px solid #ccc;
  box-shadow: inset 0 2px 2px -1px #c4c4c4;
}
.tab:last-child { border-right: 0; }
.tab-gh { letter-spacing: -.15px; }
.tab-active { background: #f6f6f6; box-shadow: none; color: #4c4c4c; }

.navbar {
  height: 84px;
  flex: none;
  display: flex;
  align-items: center;
  padding-left: 18px;
  background: #336bf6;
  border-top: 2px solid #1a4fd6;
  color: #fff;
}
.brand { font-size: 29.200px; }
.nav-links { display: flex; gap: 25px; margin-left: 1199px; margin-top: -4px; font-size: 23.700px; }
.nav-link { color: rgba(255,255,255,.55); }
.nav-active { color: #fff; }

.page { flex: 1; background: #fff; display: flex; flex-direction: column; align-items: center; }
.title {
  width: 954px;
  height: 124px;
  margin: 36px 0 0;
  padding-top: 2px;
  display: flex;
  align-items: center;
  justify-content: center;
  background: #d3e1fb;
  border: 2px solid #a5c2f9;
  border-radius: 8px;
  color: #13296a;
  font-size: 56px;
  font-weight: 600;
  letter-spacing: -1px;
}
.search-row { width: 954px; margin-top: 22px; }
.search {
  display: block;
  width: 315px;
  height: 48px;
  padding: 3px 4px 0;
  border: 1px solid #eee;
  border-bottom: 2px solid #ccc;
  outline: 0;
  font: 24px Inter, sans-serif;
}
.search::placeholder { color: #aaa; }
.users { width: 1980px; table-layout: fixed; border-collapse: separate; border-spacing: 0; font-size: 24px; letter-spacing: -.15px; color: #111; }
.c-id { width: 111px; }
.c-name { width: 658px; }
.c-mail { width: 757px; }
.c-city { width: 454px; }
.users th, .users td {
  height: 62px;
  padding: 0 12px 2px;
  text-align: left;
  border-bottom: 2px solid #dee2e6;
}
.users th { font-weight: 700; color: #000; letter-spacing: 0; }
.users tbody tr:nth-child(odd) td { background: #f2f2f2; }
.users a { color: #336bf6; text-decoration-thickness: 2px; letter-spacing: 0; }

/* dock */
.dock-area { height: 140px; flex: none; padding-top: 4px; padding-left: 494px; }
.dock {
  width: 2036px;
  height: 126px;
  padding: 17px 0 0 17px;
  display: flex;
  align-items: flex-start;
  gap: 27px;
  background: #636164;
  border: 2px solid #858385;
  border-radius: 30px;
  box-shadow: 0 0 50px rgba(0,0,0,.3);
}
.app { position: relative; width: 77px; height: 77px; flex: none; }
.app svg { width: 77px; height: 77px; }
.app .ov { overflow: visible; }
.app .sp { width: 80px; height: 80px; margin: -1px 0 0 -1.500px; }
.run::after {
  content: "";
  position: absolute;
  left: 34.500px;
  top: 95px;
  width: 8px;
  height: 8px;
  border-radius: 50%;
  background: #000;
}
.dock-sep { width: 2px; height: 94px; margin: -3px 0 0 10.500px; background: #333; }
.app.wide { width: 88px; }
.app.wide svg { width: 88px; }
.f1 { margin-left: 3px; }
.f2 { margin-left: -11px; }
.app.trash { width: 69px; margin-left: -2px; }
.app.trash svg { width: 69px; height: 89px; margin-top: -7px; overflow: visible; }
.new-text { font: 800 14px Inter, sans-serif; fill: #072b2c; text-anchor: middle; }
.jun-text { font: 600 14.500px Inter, sans-serif; fill: #fff; text-anchor: middle; }
.seven-text { font: 300 47px Inter, sans-serif; fill: #222; text-anchor: middle; }
.term-text { font: 20px "Liberation Mono", monospace; fill: #fff; }
```
